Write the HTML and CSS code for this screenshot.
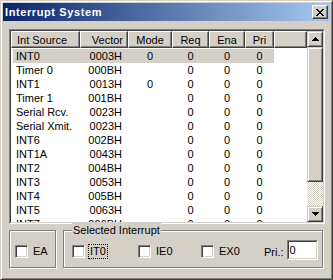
FILE: index.html
```html
<!DOCTYPE html>
<html>

<head>
    <meta charset="UTF-8">
    <title>Interrupt System</title>
    <link rel="stylesheet" href="styles.css">
</head>

<body>

    <div class="window">

        <div class="titlebar">
            <span class="title">Interrupt System</span>
            <div class="close">
                <svg width="8" height="7" viewBox="0 0 8 7" shape-rendering="crispEdges">
                    <path d="M0 0h2v1h-2zM6 0h2v1h-2zM1 1h2v1h-2zM5 1h2v1h-2zM2 2h4v1h-4zM3 3h2v1h-2zM2 4h4v1h-4zM1 5h2v1h-2zM5 5h2v1h-2zM0 6h2v1h-2zM6 6h2v1h-2z" fill="#000"/>
                </svg>
            </div>
        </div>

        <!-- список прерываний -->
        <div class="list-frame">
            <div class="list-inner">
                <div class="list-main">
                    <div class="list-head">
                        <div class="hcell hcell-left">Int Source</div>
                        <div class="hcell hcell-right">Vector</div>
                        <div class="hcell">Mode</div>
                        <div class="hcell">Req</div>
                        <div class="hcell">Ena</div>
                        <div class="hcell">Pri</div>
                        <div class="hcell"></div>
                    </div>
                    <div class="list-body">
                        <div class="row row-selected"><span>INT0</span><span>0003H</span><span>0</span><span>0</span><span>0</span><span>0</span></div>
                        <div class="row"><span>Timer 0</span><span>000BH</span><span></span><span>0</span><span>0</span><span>0</span></div>
                        <div class="row"><span>INT1</span><span>0013H</span><span>0</span><span>0</span><span>0</span><span>0</span></div>
                        <div class="row"><span>Timer 1</span><span>001BH</span><span></span><span>0</span><span>0</span><span>0</span></div>
                        <div class="row"><span>Serial Rcv.</span><span>0023H</span><span></span><span>0</span><span>0</span><span>0</span></div>
                        <div class="row"><span>Serial Xmit.</span><span>0023H</span><span></span><span>0</span><span>0</span><span>0</span></div>
                        <div class="row"><span>INT6</span><span>002BH</span><span></span><span>0</span><span>0</span><span>0</span></div>
                        <div class="row"><span>INT1A</span><span>0043H</span><span></span><span>0</span><span>0</span><span>0</span></div>
                        <div class="row"><span>INT2</span><span>004BH</span><span></span><span>0</span><span>0</span><span>0</span></div>
                        <div class="row"><span>INT3</span><span>0053H</span><span></span><span>0</span><span>0</span><span>0</span></div>
                        <div class="row"><span>INT4</span><span>005BH</span><span></span><span>0</span><span>0</span><span>0</span></div>
                        <div class="row"><span>INT5</span><span>0063H</span><span></span><span>0</span><span>0</span><span>0</span></div>
                        <div class="row"><span>INT7</span><span>006BH</span><span></span><span>0</span><span>0</span><span>0</span></div>
                    </div>
                </div>
                <div class="vscroll">
                    <div class="sbtn">
                        <svg width="7" height="4" viewBox="0 0 7 4" shape-rendering="crispEdges">
                            <path d="M3 0h1v1h-1zM2 1h3v1h-3zM1 2h5v1h-5zM0 3h7v1h-7z" fill="#000"/>
                        </svg>
                    </div>
                    <div class="track">
                        <div class="thumb"></div>
                    </div>
                    <div class="sbtn">
                        <svg width="7" height="4" viewBox="0 0 7 4" shape-rendering="crispEdges">
                            <path d="M0 0h7v1h-7zM1 1h5v1h-5zM2 2h3v1h-3zM3 3h1v1h-1z" fill="#000"/>
                        </svg>
                    </div>
                </div>
            </div>
        </div>

        <div class="bottom">
            <div class="group group-ea">
                <div class="chk"><span class="cb"></span>EA</div>
            </div>
            <div class="group group-sel">
                <span class="legend">Selected Interrupt</span>
                <div class="chk"><span class="cb"></span><span class="focus">IT0</span></div>
                <div class="chk"><span class="cb"></span>IE0</div>
                <div class="chk"><span class="cb"></span>EX0</div>
                <span class="pri-label">Pri.:</span>
                <div class="edit">
                    <div class="edit-inner">0</div>
                </div>
            </div>
        </div>

    </div>

</body>

</html>
```

FILE: styles.css
```css
body {
    margin: 0;
    font-family: "Liberation Sans", Arial, sans-serif;
    font-size: 11px;
    color: #000;
}

.window {
    width: 333px;
    height: 280px;
    box-sizing: border-box;
    padding: 2px;
    background: #d4d0c8;
    border: 1px solid;
    border-color: #d4d0c8 #404040 #404040 #d4d0c8;
    box-shadow: inset 1px 1px #fff, inset -1px -1px #808080;
}

.titlebar {
    height: 18px;
    display: flex;
    align-items: center;
    justify-content: space-between;
    padding-left: 2px;
    padding-right: 2px;
    background: linear-gradient(to right, #0a246a, #a6caf0);
}

.title {
    color: #fff;
    font-weight: bold;
    font-size: 11px;
    letter-spacing: 0.6px;
}

.close {
    width: 16px;
    height: 14px;
    box-sizing: border-box;
    display: flex;
    align-items: center;
    justify-content: center;
    background: #d4d0c8;
    border: 1px solid;
    border-color: #fff #404040 #404040 #fff;
    box-shadow: inset -1px -1px #808080;
}

/* список */
.list-frame {
    width: 316px;
    height: 195px;
    box-sizing: border-box;
    margin: 8px 0 0 6px;
    border: 1px solid;
    border-color: #808080 #fff #fff #808080;
}

.list-inner {
    height: 100%;
    box-sizing: border-box;
    display: flex;
    background: #fff;
    border: 1px solid;
    border-color: #404040 #d4d0c8 #d4d0c8 #404040;
}

.list-main {
    flex: 1;
    overflow: hidden;
}

.list-head {
    display: grid;
    grid-template-columns: 69px 48px 44px 37px 36px 29px 1fr;
    height: 17px;
}

.hcell {
    box-sizing: border-box;
    height: 17px;
    padding-top: 1px;
    line-height: 14px;
    text-align: center;
    white-space: nowrap;
    background: #d4d0c8;
    border: 1px solid;
    border-color: #fff #404040 #404040 #fff;
    box-shadow: inset -1px -1px #808080;
}

.hcell-left {
    text-align: left;
    padding-left: 5px;
}

.hcell-right {
    text-align: right;
    padding-right: 4px;
}

.list-body {
    padding: 1px 0 0 2px;
}

.row {
    display: grid;
    grid-template-columns: 67px 48px 44px 37px 36px 29px;
    width: 261px;
    height: 14px;
    line-height: 14px;
    white-space: nowrap;
    text-align: center;
}

.row span:first-child {
    text-align: left;
    padding-left: 3px;
}

.row span:nth-child(2) {
    text-align: right;
    padding-right: 6px;
}

.row-selected {
    background: #d4d0c8;
}

.vscroll {
    width: 16px;
    display: flex;
    flex-direction: column;
}

.sbtn,
.thumb {
    box-sizing: border-box;
    background: #d4d0c8;
    border: 1px solid;
    border-color: #d4d0c8 #404040 #404040 #d4d0c8;
    box-shadow: inset 1px 1px #fff, inset -1px -1px #808080;
}

.sbtn {
    height: 16px;
    display: flex;
    align-items: center;
    justify-content: center;
}

.track {
    flex: 1;
    background: repeating-conic-gradient(#fff 0 25%, #d4d0c8 0 50%) 0 0 / 2px 2px;
}

.thumb {
    height: 135px;
}

/* нижняя часть */
.bottom {
    display: flex;
    gap: 7px;
    margin: 6px 0 0 6px;
}

.group {
    position: relative;
    height: 38px;
    box-sizing: border-box;
    border: 1px solid #808080;
    box-shadow: inset 1px 1px #fff, 1px 1px #fff;
    display: flex;
    align-items: center;
    padding-top: 5px;
}

.group-ea {
    width: 47px;
    padding-left: 5px;
}

.group-sel {
    width: 260px;
    padding-left: 8px;
    display: grid;
    grid-template-columns: 66px 63px 63px auto auto;
    justify-content: start;
}

.legend {
    position: absolute;
    left: 8px;
    top: -8px;
    padding: 0 1px;
    line-height: 14px;
    background: #d4d0c8;
}

.chk {
    display: flex;
    align-items: center;
    gap: 5px;
    line-height: 13px;
}

.cb {
    width: 13px;
    height: 13px;
    box-sizing: border-box;
    background: #fff;
    border: 1px solid;
    border-color: #808080 #fff #fff #808080;
    box-shadow: inset 1px 1px #404040, inset -1px -1px #d4d0c8;
}

.focus {
    outline: 1px dotted #000;
    padding: 0 1px;
    margin-left: -1px;
}

.pri-label {
    margin-right: 3px;
}

.edit {
    width: 31px;
    height: 20px;
    box-sizing: border-box;
    margin-top: -3px;
    border: 1px solid;
    border-color: #808080 #fff #fff #808080;
}

.edit-inner {
    height: 100%;
    box-sizing: border-box;
    padding-left: 1px;
    line-height: 16px;
    background: #fff;
    border: 1px solid;
    border-color: #404040 #d4d0c8 #d4d0c8 #404040;
}
```
